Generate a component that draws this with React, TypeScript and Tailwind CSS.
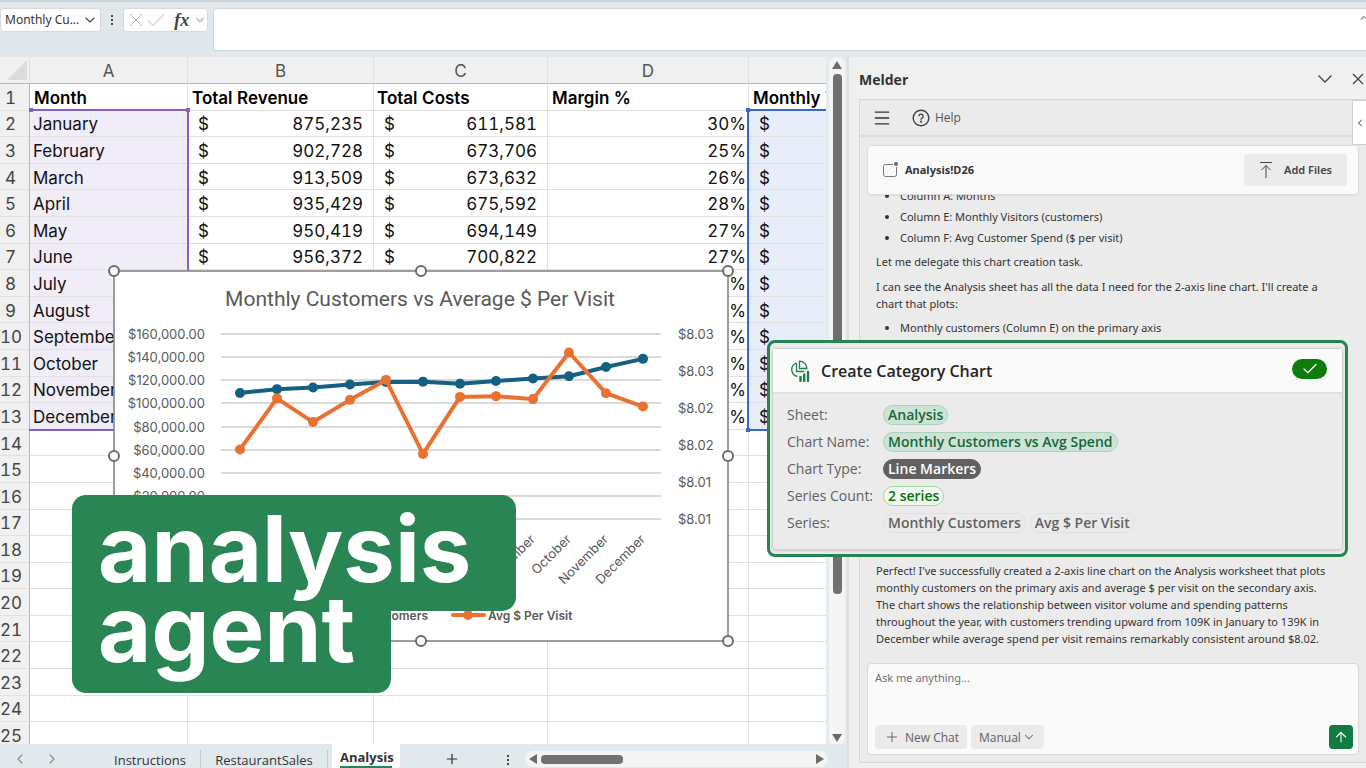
import React from 'react';
import { ArrowUp, Check, ChevronDown, ChevronLeft, ChevronRight, ChevronUp, Menu, Plus } from 'lucide-react';

interface SheetRow {
    month: string;
    revenue?: string;
    costs?: string;
    margin: string;
}

const sheetRows: SheetRow[] = [
    { month: 'January', revenue: '875,235', costs: '611,581', margin: '30%' },
    { month: 'February', revenue: '902,728', costs: '673,706', margin: '25%' },
    { month: 'March', revenue: '913,509', costs: '673,632', margin: '26%' },
    { month: 'April', revenue: '935,429', costs: '675,592', margin: '28%' },
    { month: 'May', revenue: '950,419', costs: '694,149', margin: '27%' },
    { month: 'June', revenue: '956,372', costs: '700,822', margin: '27%' },
    { month: 'July', margin: '27%' },
    { month: 'August', margin: '27%' },
    { month: 'September', margin: '27%' },
    { month: 'October', margin: '27%' },
    { month: 'November', margin: '26%' },
    { month: 'December', margin: '26%' },
];

const emptyRows = Array.from({ length: 12 }, (_, i) => i + 14);

// Chart data
const customers = [109000, 112300, 113800, 116400, 118500, 118800, 117000, 119300, 121500, 123500, 131500, 138500];
const spend = [8.0144, 8.0213, 8.0181, 8.0211, 8.0238, 8.0138, 8.0215, 8.0216, 8.0212, 8.0275, 8.022, 8.0202];
const leftTicks = [160, 140, 120, 100, 80, 60, 40, 20, 0];
const rightTicks = ['$8.03', '$8.03', '$8.02', '$8.02', '$8.01', '$8.01'];

const plotTop = 63;
const plotHeight = 185;
const pointX = (i: number) => Math.round(126 + i * 36.6);
const customerY = (v: number) => plotTop + plotHeight * (1 - v / 160000);
const spendY = (v: number) => plotTop + plotHeight * (1 - (v - 8.005) / 0.025);

function Series({ values, toY, color }: { values: number[]; toY: (v: number) => number; color: string }) {
    return (
        <g fill={color} stroke={color}>
            <polyline
                points={values.map((v, i) => `${pointX(i)},${toY(v)}`).join(' ')}
                fill="none"
                strokeWidth="4"
                strokeLinejoin="round"
            />
            {values.map((v, i) => (
                <circle key={i} cx={pointX(i)} cy={toY(v)} r="5" stroke="none" />
            ))}
        </g>
    );
}

function ChartObject() {
    const handles = [[0, 0], [307, 0], [614, 0], [0, 185], [614, 185], [0, 370], [307, 370], [614, 370]];

    return (
        <svg
            width="614"
            height="370"
            viewBox="0 0 614 370"
            className="absolute left-[114px] top-[214px] overflow-visible font-['Inter',sans-serif] text-[13px]"
            fill="#595959"
        >
            <rect width="614" height="370" fill="#fff" stroke="#7f7f7f" strokeWidth="1.5" />
            <text x="306" y="35" textAnchor="middle" className="font-['Roboto',sans-serif] text-[21px]">
                Monthly Customers vs Average $ Per Visit
            </text>

            {leftTicks.map((tick, i) => {
                const y = Math.round(plotTop + (i * plotHeight) / 8);
                return (
                    <g key={tick}>
                        <line x1="107" x2="547" y1={y} y2={y} stroke="#d9d9d9" strokeWidth="2" />
                        <text x="91" y={y + 5} textAnchor="end">
                            {tick === 0 ? '$-' : `$${tick},000.00`}
                        </text>
                    </g>
                );
            })}
            {rightTicks.map((tick, i) => (
                <text key={i} x="564" y={Math.round(plotTop + i * 37) + 5}>{tick}</text>
            ))}

            <Series values={customers} toY={customerY} color="#156082" />
            <Series values={spend} toY={spendY} color="#e97132" />

            {sheetRows.map((row, i) => (
                <text key={row.month} textAnchor="end" transform={`translate(${pointX(i) + 3} 269) rotate(-45)`}>
                    {row.month}
                </text>
            ))}

            <g className="text-[12px] font-semibold">
                <text x="314" y="349" textAnchor="end">Monthly Customers</text>
                <line x1="339" x2="370" y1="344" y2="344" stroke="#e97132" strokeWidth="4" strokeLinecap="round" />
                <circle cx="354" cy="344" r="5" fill="#e97132" />
                <text x="374" y="349">Avg $ Per Visit</text>
            </g>

            {handles.map(([x, y]) => (
                <circle key={`${x}-${y}`} cx={x} cy={y} r="5" fill="#fff" stroke="#6b6b6b" strokeWidth="2" />
            ))}
        </svg>
    );
}

function FormulaBar() {
    return (
        <header className="flex h-[57px] shrink-0 items-start gap-[5px] border-t-2 border-[#cdd3d7] bg-[#e1e8ec] pt-[6px] text-[#444]">
            <div className="relative flex h-6 w-[101px] items-center rounded border border-[#d5dadd] bg-white">
                <select aria-label="Name box" className="w-full appearance-none bg-transparent pl-1 font-['Noto_Sans',sans-serif] text-[12px] text-[#333]">
                    <option>Monthly Cu...</option>
                </select>
                <ChevronDown className="pointer-events-none absolute right-[2px] h-4 w-4" strokeWidth={1.6} />
            </div>
            <button aria-label="Name box options" className="flex h-6 w-3 flex-col items-center justify-center gap-[2px]">
                <span className="h-[2px] w-[2px] bg-[#444]" />
                <span className="h-[2px] w-[2px] bg-[#444]" />
                <span className="h-[2px] w-[2px] bg-[#444]" />
            </button>
            <div className="flex h-6 w-[85px] shrink-0 items-center justify-between rounded border border-[#d5dadd] bg-white pl-[5px] text-[#b5b5b5]">
                <button aria-label="Cancel">
                    <svg viewBox="0 0 14 14" className="h-[14px] w-[14px]" fill="none" stroke="currentColor">
                        <path d="m1 1 12 12M13 1 1 13" />
                    </svg>
                </button>
                <button aria-label="Enter">
                    <svg viewBox="0 0 18 16" className="h-4 w-[18px]" fill="none" stroke="currentColor">
                        <path d="M1 8.5 6 13.5 17 2.5" />
                    </svg>
                </button>
                <button aria-label="Insert function" className="pl-[6px] font-['Liberation_Serif',serif] text-[18px] leading-5 font-bold text-[#444] italic">fx</button>
                <button aria-label="More functions"><ChevronDown className="h-[14px] w-[14px]" /></button>
            </div>
            <div className="relative h-[43px] flex-1">
                <input aria-label="Formula" className="h-full w-full rounded-l border border-r-0 border-[#cfd5d8] bg-white px-2" />
                <button aria-label="Collapse formula bar" className="absolute top-1 -right-1">
                    <ChevronUp className="h-3 w-3" />
                </button>
            </div>
        </header>
    );
}

const cell = 'overflow-hidden border-r border-b border-[#e1e1e1] p-0 pt-[2px] whitespace-nowrap';

function Money({ value }: { value?: string }) {
    return (
        <div className="flex justify-between px-[10px]">
            <span>$</span>
            <span>{value}</span>
        </div>
    );
}

function RowNumber({ children }: { children: React.ReactNode }) {
    return (
        <th scope="row" className="border-r border-b border-r-[#b5b5b5] border-b-[#e1e1e1] bg-[#f0f0f0] p-0 pt-[2px] pr-2 text-center font-normal text-[#444]">
            {children}
        </th>
    );
}

function Worksheet() {
    return (
        <div className="relative min-h-0 min-w-0 flex-1 overflow-hidden bg-white">
            <table className="h-[692px] w-[920px] table-fixed border-separate border-spacing-0 font-['Inter',sans-serif] text-[17px] leading-5 text-[#111] tabular-nums">
                <colgroup>
                    <col className="w-[30px]" />
                    <col className="w-[158px]" />
                    <col className="w-[186px]" />
                    <col className="w-[174px]" />
                    <col className="w-[201px]" />
                    <col className="w-[171px]" />
                </colgroup>
                <thead>
                    <tr className="h-[27px] bg-[#f0f0f0] text-[#555]">
                        <th className="h-[27px] border-r border-b border-r-[#e1e1e1] border-b-[#b5b5b5] p-0">
                            <svg viewBox="0 0 20 20" className="ml-[7px] h-5 w-5" fill="#dcdcdc"><path d="M20 0v20H0z" /></svg>
                        </th>
                        {['A', 'B', 'C', 'D', 'E'].map((letter) => (
                            <th key={letter} scope="col" className="border-r border-b border-r-[#e1e1e1] border-b-[#b5b5b5] p-0 pt-[2px] font-normal">
                                {letter}
                            </th>
                        ))}
                    </tr>
                </thead>
                <tbody>
                    <tr className="font-semibold text-black">
                        <RowNumber>1</RowNumber>
                        <td className={`${cell} pl-1`}>Month</td>
                        <td className={`${cell} pl-1`}>Total Revenue</td>
                        <td className={`${cell} pl-[3px]`}>Total Costs</td>
                        <td className={`${cell} pl-1`}>Margin %</td>
                        <td className={`${cell} pl-1`}>Monthly Visitors</td>
                    </tr>
                    {sheetRows.map((row, i) => (
                        <tr key={row.month}>
                            <RowNumber>{i + 2}</RowNumber>
                            <td className={`${cell} bg-[#f1edf8] pl-[3px]`}>{row.month}</td>
                            <td className={cell}><Money value={row.revenue} /></td>
                            <td className={cell}><Money value={row.costs} /></td>
                            <td className={`${cell} pr-[2px] text-right`}>{row.margin}</td>
                            <td className={`${cell} bg-[#e8eef9]`}><Money /></td>
                        </tr>
                    ))}
                    {emptyRows.map((n) => (
                        <tr key={n}>
                            <RowNumber>{n}</RowNumber>
                            <td className={cell} />
                            <td className={cell} />
                            <td className={cell} />
                            <td className={cell} />
                            <td className={cell} />
                        </tr>
                    ))}
                </tbody>
            </table>

            {/* Source ranges of the selected chart */}
            <div className="absolute top-[52px] left-[29px] h-[322px] w-40 border-2 border-l-0 border-[#8661c5]">
                <span className="absolute -top-[3px] -right-[3px] h-1 w-1 bg-[#8661c5]" />
                <span className="absolute -top-[3px] left-0 h-1 w-1 bg-[#8661c5]" />
            </div>
            <div className="absolute top-[52px] left-[747px] h-[322px] w-[173px] border-2 border-[#3867c8]">
                <span className="absolute -top-[3px] -left-[3px] h-1 w-1 bg-[#3867c8]" />
                <span className="absolute -bottom-[3px] -left-[3px] h-1 w-1 bg-[#3867c8]" />
            </div>

            <ChartObject />
        </div>
    );
}

function VerticalScrollbar() {
    return (
        <div className="mr-[2px] mb-[-2px] ml-[3px] flex w-4 shrink-0 flex-col items-center rounded-lg bg-[#f4f4f4] py-1 text-[#6b6b6b]">
            <svg viewBox="0 0 10 8" className="h-2 w-[10px]" fill="currentColor"><path d="M5 0 10 8H0z" /></svg>
            <div className="mt-[5px] w-[9px] flex-[520] rounded bg-[#707070]" />
            <div className="flex-[140]" />
            <svg viewBox="0 0 10 8" className="h-2 w-[10px]" fill="currentColor"><path d="M5 8 0 0h10z" /></svg>
        </div>
    );
}

function SheetTabs() {
    return (
        <nav className="flex h-6 shrink-0 items-start overflow-hidden bg-[#e2e9ec] font-['Open_Sans',sans-serif] text-[13px] leading-5 text-[#333]">
            <div className="flex w-[100px] shrink-0 gap-4 pt-[7px] pl-3 text-[#8a8a8a]">
                <button aria-label="Previous sheet"><ChevronLeft className="h-4 w-4" strokeWidth={1.6} /></button>
                <button aria-label="Next sheet"><ChevronRight className="h-4 w-4" strokeWidth={1.6} /></button>
            </div>
            <button className="mt-[6px] w-[101px] shrink-0 border-r border-[#c5cacd]">Instructions</button>
            <button className="mt-[6px] w-[127px] shrink-0 border-r border-[#c5cacd]">RestaurantSales</button>
            <button className="ml-1 h-6 w-[68px] shrink-0 bg-white px-2 pt-1 font-bold">
                <span className="block border-b-2 border-[#258452] leading-[18px]">Analysis</span>
            </button>
            <button aria-label="New sheet" className="ml-11 shrink-0 pt-[7px]"><Plus className="h-4 w-4" strokeWidth={1.8} /></button>
            <button aria-label="Tab options" className="ml-[47px] flex shrink-0 flex-col gap-[2px] pt-[11px]">
                <span className="h-[2px] w-[2px] bg-[#444]" />
                <span className="h-[2px] w-[2px] bg-[#444]" />
                <span className="h-[2px] w-[2px] bg-[#444]" />
            </button>
            <div className="mt-[7px] mr-[19px] ml-4 flex h-4 flex-1 items-center rounded-lg bg-[#f4f4f4] px-1 text-[#6b6b6b]">
                <svg viewBox="0 0 8 10" className="h-[10px] w-2" fill="currentColor"><path d="M0 5 8 0v10z" /></svg>
                <div className="ml-1 h-[9px] w-[82px] rounded bg-[#707070]" />
                <div className="flex-1" />
                <svg viewBox="0 0 8 10" className="h-[10px] w-2" fill="currentColor"><path d="M8 5 0 10V0z" /></svg>
            </div>
        </nav>
    );
}

function MelderPane() {
    return (
        <aside className="flex w-[519px] shrink-0 flex-col border-l-2 border-[#dadedf] bg-[#f0f0f0] pb-[5px] pl-[10px] font-['Noto_Sans',sans-serif] text-[11px] leading-[17px] text-[#333]">
            <div className="flex h-[42px] shrink-0 items-center pt-[2px] text-[#444]">
                <h2 className="flex-1 font-['Open_Sans',sans-serif] text-[14px] font-bold text-[#333]">Melder</h2>
                <button aria-label="Pane options">
                    <svg viewBox="0 0 16 16" className="h-4 w-4" fill="none" stroke="currentColor" strokeWidth="1.3">
                        <path d="m1.5 4.5 6.5 6.5 6.5-6.5" />
                    </svg>
                </button>
                <button aria-label="Close pane" className="ml-[17px]">
                    <svg viewBox="0 0 16 16" className="h-4 w-4" fill="none" stroke="currentColor" strokeWidth="1.3">
                        <path d="m3 3 10 10M13 3 3 13" />
                    </svg>
                </button>
            </div>

            <div className="relative flex min-h-0 flex-1 flex-col border border-r-0 border-[#d6d6d6] bg-[#ebebeb]">
                <div className="flex h-[37px] shrink-0 items-center gap-5 border-b-2 border-[#dedede] pl-3 font-['Open_Sans',sans-serif] text-[12px]">
                    <button aria-label="Menu"><Menu className="h-5 w-5" strokeWidth={1.6} /></button>
                    <button className="flex items-center gap-[5px] text-[#555]">
                        <svg viewBox="0 0 18 18" className="h-[18px] w-[18px]" fill="none" stroke="#444" strokeWidth="1.4">
                            <circle cx="9" cy="9" r="7.8" />
                            <path d="M6.9 7.2a2.1 2.1 0 1 1 3.2 1.8c-.7.5-1.1.8-1.1 1.7" />
                            <circle cx="9" cy="12.7" r=".4" />
                        </svg>
                        Help
                    </button>
                </div>
                <button aria-label="Expand" className="absolute top-0 right-0 flex h-[45px] w-[14px] items-center justify-center border border-r-0 border-[#cfcfcf] bg-white">
                    <ChevronLeft className="h-3 w-3" />
                </button>

                <div className="mx-[7px] mt-2 flex h-[50px] shrink-0 items-center rounded border border-[#dcdcdc] bg-[#fafafa] pr-[11px] pb-px pl-[14px] shadow-xs">
                    <svg viewBox="0 0 16 16" className="h-4 w-4" fill="none" stroke="#777">
                        <path d="M11 2.5H3.5a2 2 0 0 0-2 2v8a2 2 0 0 0 2 2h9a2 2 0 0 0 2-2V5" />
                        <circle cx="14" cy="2" r="2" fill="#666" stroke="none" />
                    </svg>
                    <span className="ml-[7px] flex-1 font-bold">Analysis!D26</span>
                    <button className="flex h-8 w-[103px] items-center gap-[10px] rounded bg-[#ebebeb] pl-[14px] font-semibold text-[#444]">
                        <svg viewBox="0 0 16 18" className="h-[18px] w-4" fill="none" stroke="currentColor">
                            <path d="M2 1.5h12M8 17V4.5M3.5 9 8 4.5 12.5 9" />
                        </svg>
                        Add Files
                    </button>
                </div>

                <div className="flex min-h-0 flex-1 flex-col overflow-hidden pr-8 pb-4 pl-4">
                    <ul className="-mt-2 list-disc space-y-1 pl-6">
                        <li>Column A: Months</li>
                        <li>Column E: Monthly Visitors (customers)</li>
                        <li>Column F: Avg Customer Spend ($ per visit)</li>
                    </ul>
                    <p className="mt-[7px]">Let me delegate this chart creation task.</p>
                    <p className="mt-2">
                        I can see the Analysis sheet has all the data I need for the 2-axis line chart. I'll create a chart that plots:
                    </p>
                    <ul className="mt-[7px] list-disc pl-6">
                        <li>Monthly customers (Column E) on the primary axis</li>
                    </ul>
                    <p className="mt-auto">
                        Perfect! I've successfully created a 2-axis line chart on the Analysis worksheet that plots monthly
                        customers on the primary axis and average $ per visit on the secondary axis. The chart shows the
                        relationship between visitor volume and spending patterns throughout the year, with customers
                        trending upward from 109K in January to 139K in December while average spend per visit remains
                        remarkably consistent around $8.02.
                    </p>
                </div>

                <div className="mx-[7px] mb-[7px] flex h-[92px] shrink-0 flex-col rounded border border-[#d9d9d9] bg-[#fafafa] py-[5px] pr-[5px] pl-[7px]">
                    <textarea aria-label="Message" placeholder="Ask me anything..." className="min-h-0 flex-1 resize-none bg-transparent placeholder:text-[#707070]" />
                    <div className="flex items-center gap-1 font-['Open_Sans',sans-serif] text-[12px] text-[#616161]">
                        <button className="flex h-6 w-[92px] items-center gap-[5px] rounded bg-[#ebebeb] pl-[9px]">
                            <Plus className="h-4 w-4" strokeWidth={1.4} />
                            New Chat
                        </button>
                        <div className="relative flex h-6 w-[73px] items-center rounded bg-[#ebebeb]">
                            <select aria-label="Mode" className="w-full appearance-none bg-transparent pl-2">
                                <option>Manual</option>
                            </select>
                            <ChevronDown className="pointer-events-none absolute right-2 h-[14px] w-[14px]" strokeWidth={1.8} />
                        </div>
                        <button aria-label="Send" className="ml-auto flex h-6 w-6 items-center justify-center rounded bg-[#107c41] text-white">
                            <ArrowUp className="h-4 w-4" strokeWidth={1.6} />
                        </button>
                    </div>
                </div>
            </div>
        </aside>
    );
}

const badge = 'rounded-full border px-1 leading-[18px] font-semibold';

function ToolCallout() {
    return (
        <section className="absolute top-[340px] right-[18px] w-[581px] rounded-lg border-3 border-[#258452] bg-[#ebebeb] px-[2px] pt-[5px] pb-1 font-['Open_Sans',sans-serif] text-[14px] text-[#616161]">
            <div className="rounded-sm border border-[#d0d0d0] shadow">
                <div className="flex h-[45px] items-center border-b-2 border-[#e0e0e0] bg-[#fafafa] pr-[15px] pl-[17px]">
                    <svg viewBox="0 0 20 22" className="h-[22px] w-5" fill="none" stroke="#1e7f48" strokeWidth="1.3">
                        <path d="M9.5 1.2V8.5H16.8A7.3 7.3 0 0 0 9.500 1.2z" />
                        <path d="M6.5 3A7 7 0 0 0 7.5 16.5M6.5 3v8.500H14" />
                        <path d="M10.5 17v4M14.2 14.5V21M18 12V21" strokeWidth="2.4" strokeLinecap="round" />
                    </svg>
                    <h3 className="ml-[11px] flex-1 text-[16px] font-semibold text-[#242424]">Create Category Chart</h3>
                    <span className="mb-1 flex h-5 w-[35px] items-center justify-center rounded-full bg-[#107c10] text-white">
                        <Check className="h-[18px] w-[18px]" strokeWidth={1.6} />
                    </span>
                </div>
                <dl className="grid grid-cols-[86px_1fr] gap-x-[10px] gap-y-[7px] pt-[11px] pb-4 pl-[14px] leading-5">
                    <dt>Sheet:</dt>
                    <dd className="flex">
                        <span className={`${badge} border-[#a9d3b9] bg-[#cde3d5] text-[#19663b]`}>Analysis</span>
                    </dd>
                    <dt className="whitespace-nowrap">Chart Name:</dt>
                    <dd className="flex">
                        <span className={`${badge} border-[#a9d3b9] bg-[#cde3d5] text-[#19663b]`}>Monthly Customers vs Avg Spend</span>
                    </dd>
                    <dt className="whitespace-nowrap">Chart Type:</dt>
                    <dd className="flex">
                        <span className={`${badge} border-[#616161] bg-[#616161] text-white`}>Line Markers</span>
                    </dd>
                    <dt className="whitespace-nowrap">Series Count:</dt>
                    <dd className="flex">
                        <span className={`${badge} border-[#9fd89f] bg-[#f1faf1] text-[#0e700e]`}>2 series</span>
                    </dd>
                    <dt>Series:</dt>
                    <dd className="flex gap-1">
                        <span className={`${badge} border-[#e0e0e0]`}>Monthly Customers</span>
                        <span className={`${badge} border-[#e0e0e0]`}>Avg $ Per Visit</span>
                    </dd>
                </dl>
            </div>
        </section>
    );
}

function Caption() {
    return (
        <h1 className="absolute top-[495px] left-[72px] flex flex-col items-start font-['Inter',sans-serif] text-[92px] leading-[80px] font-bold text-white">
            <span className="w-[444px] rounded-[14px] rounded-bl-none bg-[#298554] pt-[14px] pb-[22px] pl-[26px]">
                <span className="relative z-10">analysis</span>
            </span>
            <span className="-mt-[22px] w-[319px] rounded-b-[14px] bg-[#298554] pb-6 pl-[26px]">
                <span className="relative z-10">agent</span>
            </span>
        </h1>
    );
}

export default function App() {
    return (
        <div className="relative flex h-screen flex-col overflow-hidden bg-[#e3ebee]">
            <FormulaBar />
            <main className="flex min-h-0 flex-1">
                <div className="flex min-w-0 flex-1 flex-col">
                    <div className="flex min-h-0 flex-1">
                        <Worksheet />
                        <VerticalScrollbar />
                    </div>
                    <SheetTabs />
                </div>
                <MelderPane />
            </main>
            <ToolCallout />
            <Caption />
        </div>
    );
}
